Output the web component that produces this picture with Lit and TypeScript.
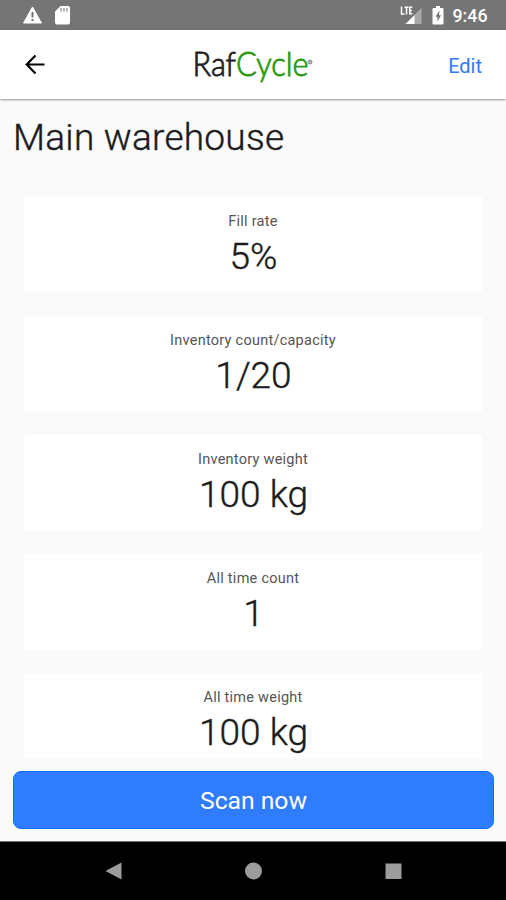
import { LitElement, html, css, svg } from "lit";
import { customElement } from "lit/decorators.js";

const stats = [
  { label: "Fill rate", value: "5%" },
  { label: "Inventory count/capacity", value: "1/20" },
  { label: "Inventory weight", value: "100 kg" },
  { label: "All time count", value: "1" },
  { label: "All time weight", value: "100 kg" },
];

const logo = svg`
  <text class="logo" x="12.500" y="41" textLength="116" lengthAdjust="spacingAndGlyphs">Raf<tspan class="cycle">Cycle</tspan></text>
  <circle cx="130" cy="27" r="2" fill="#b5b5b5" stroke="#8c8c8c" stroke-width="1"/>`;

@customElement("app-root")
export class AppRoot extends LitElement {
  static styles = css`
    :host {
      display: flex;
      flex-direction: column;
      height: 900px;
      overflow: hidden;
      background: #fafafa;
      color: #1b1b1b;
      font-family: Roboto, sans-serif;
    }
    svg { display: block; }
    .status {
      flex: none;
      box-sizing: border-box;
      height: 30px;
      background: #757575;
      color: #fff;
      display: flex;
      align-items: center;
      justify-content: space-between;
    }
    .clock {
      font-size: 17.8px;
      font-weight: 500;
      line-height: 30px;
      padding: 1px 18.5px 0 0;
      height: 29px;
    }
    .right { display: flex; align-items: center; }
    .header {
      flex: none;
      height: 69px;
      background: #fff;
      display: grid;
      grid-template-columns: 180px 150px 1fr;
      align-items: center;
      box-shadow: 0 1px 2px rgba(0, 0, 0, 0.4);
    }
    .logo {
      font-family: Lato, sans-serif;
      font-weight: 300;
      font-size: 34px;
      stroke-width: 0.9px;
      fill: #222;
      stroke: #222;
    }
    .cycle { fill: #2c9a12; stroke: #2c9a12; }
    .edit {
      justify-self: end;
      padding: 3px 24px 0 0;
      font-size: 20px;
      color: #307bf4;
    }
    .body {
      height: 660px;
      flex: none;
      overflow: hidden;
    }
    h1 {
      margin: 0;
      padding: 17px 0 0 13px;
      height: 80px;
      font-size: 37px;
      line-height: 44px;
      font-weight: 300;
      letter-spacing: 0.25px;
      -webkit-text-stroke: 0.4px #1b1b1b;
    }
    .cards {
      display: flex;
      flex-direction: column;
      gap: 23px;
      padding: 0 24px;
    }
    .card {
      box-sizing: border-box;
      height: 96px;
      background: #fff;
      border-radius: 2px;
      text-align: center;
      padding-top: 16px;
    }
    .card:first-child {
      padding-top: 17px;
      margin-bottom: 1px;
    }
    .label {
      font-size: 14.5px;
      line-height: 18px;
      letter-spacing: 0.25px;
      color: #555;
    }
    .value {
      font-size: 37px;
      line-height: 44px;
      margin-top: 4px;
      padding-left: 1px;
      font-weight: 300;
      -webkit-text-stroke: 0.4px #1b1b1b;
    }
    .scan {
      flex: none;
      box-sizing: border-box;
      height: 58px;
      margin: 12px 12px 12px 13px;
      border: 1px solid #0f6ffb;
      border-radius: 8px;
      background: #2f7dfd;
      color: #fff;
      font: 400 24.7px/54px Roboto, sans-serif;
      letter-spacing: 0;
      padding: 2px 0 0;
    }
    .nav {
      flex: 1;
      background: #000;
      border-top: 1px solid #777;
    }
  `;

  render() {
    return html`
      <div class="status">
        <svg width="80" height="30" viewBox="0 0 80 30">
          <path d="M32.5 7 41.5 23H23.5Z" fill="#fff" stroke="#fff" stroke-width="1" stroke-linejoin="round"/>
          <path d="M32.5 12V17.5M32.5 19V21" stroke="#757575" stroke-width="2"/>
          <path d="M60.5 6H68Q70 6 70 8V22.500Q70 24.500 68 24.500H57Q55 24.500 55 22.500V11.500Z" fill="#fff"/>
          <path d="M61 8V11.500M64 8V11.500M67 8V11.500" stroke="#8b8b8b" stroke-width="1.300"/>
        </svg>
        <div class="right">
          <svg width="52" height="30" viewBox="0 0 52 30">
            <path d="M21.500 8V24H5.500Z" fill="#a9a9a9"/>
            <path d="M14.500 15V24H5.500Z" fill="#fff"/>
            <path d="M1.500 6.500V14H4.500M4.500 7.200H8.500M6.500 7V14.500M12.300 7.200H9.800V13.800H12.300M9.800 10.500H12" fill="none" stroke="#fff" stroke-width="1.500"/>
            <path d="M36 6H40V8H42.500Q43.500 8 43.500 9V23.500Q43.500 24.500 42.500 24.500H33.500Q32.500 24.500 32.500 23.500V9Q32.500 8 33.500 8H36Z" fill="#fff"/>
            <path d="M39.500 10.500 35.500 16.800H37.500V21.500L41 15.200H39Z" fill="#707070"/>
          </svg>
          <div class="clock">9:46</div>
        </div>
      </div>
      <div class="header">
        <svg width="60" height="69" viewBox="0 0 60 69">
          <path d="M44.500 34.500H27M35.500 25.500 26.700 34.500 35.500 43.500" fill="none" stroke="#000" stroke-width="2.200"/>
        </svg>
        <svg width="150" height="60" viewBox="0 0 150 60">${logo}</svg>
        <div class="edit">Edit</div>
      </div>
      <div class="body">
        <h1>Main warehouse</h1>
        <div class="cards">
          ${stats.map(
            (s) => html`<div class="card">
              <div class="label">${s.label}</div>
              <div class="value">${s.value}</div>
            </div>`
          )}
        </div>
      </div>
      <button class="scan">Scan now</button>
      <div class="nav">
        <svg width="506" height="58" viewBox="0 0 506 58">
          <path d="M105.500 29 121.500 20.500V37.500Z" fill="#9c9c9c"/>
          <circle cx="253.500" cy="29" r="8.500" fill="#9c9c9c"/>
          <path d="M385.500 21.500H401.500V37H385.500Z" fill="#9c9c9c"/>
        </svg>
      </div>
    `;
  }
}
